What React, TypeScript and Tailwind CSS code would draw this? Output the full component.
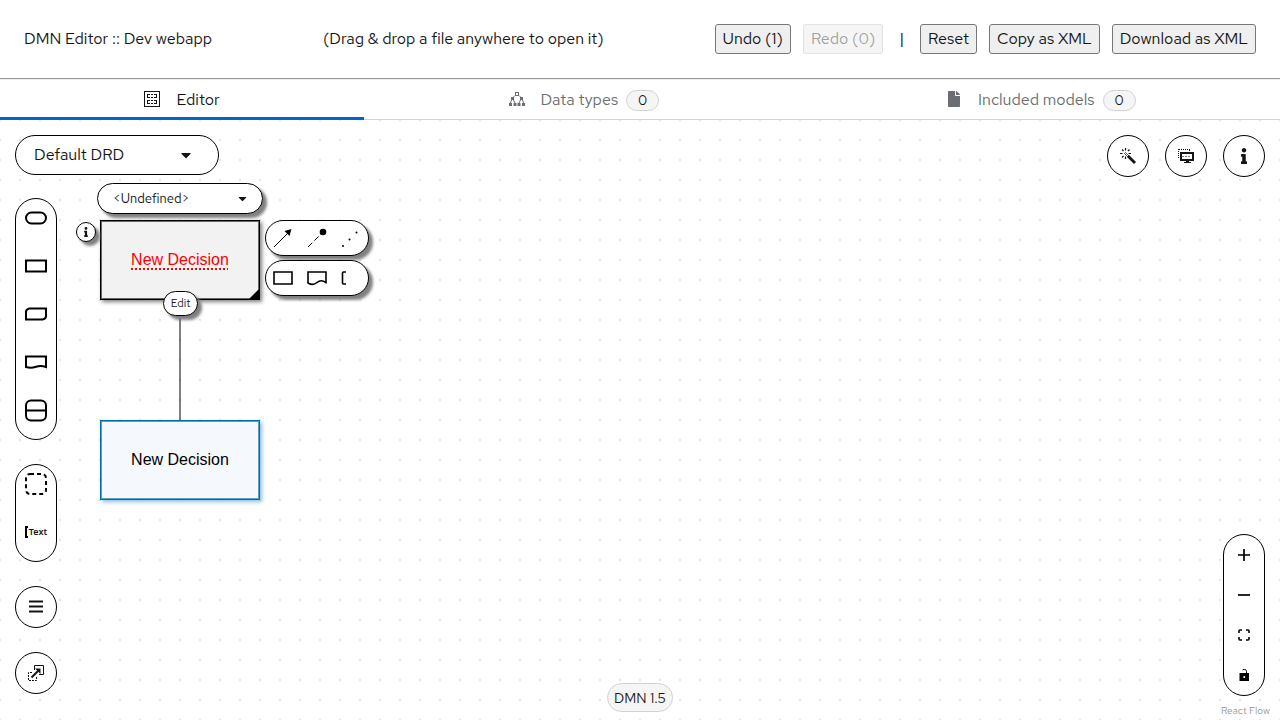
import type { ReactNode } from 'react';
import { FaCaretDown, FaFile, FaInfo } from 'react-icons/fa';

const headerButton =
  'h-[30px] rounded-[3px] border border-[#767676] bg-[#efefef] px-[7px] text-base text-[#151515] disabled:border-[#d6d6d6]/60 disabled:bg-[#efefef]/60 disabled:text-[#101010]/40';

const floatShadow = 'shadow-[4px_4px_3px_#808080]';

function Count({ value }: { value: number }) {
  return (
    <span className="flex h-[21px] min-w-[33px] items-center justify-center rounded-full border border-[#d2d2d2] bg-[#f5f5f5] px-2 text-sm text-[#151515]">
      {value}
    </span>
  );
}

function Tab({ icon, label, count, active = false }: { icon: ReactNode; label: string; count?: number; active?: boolean }) {
  return (
    <button
      type="button"
      role="tab"
      aria-selected={active}
      className={
        active
          ? 'flex h-10 flex-auto items-center justify-center border-b-3 border-[#0066cc] pt-[3px] text-[#151515]'
          : 'flex h-10 flex-auto items-center justify-center border-b border-[#d2d2d2] pt-px text-[#6a6e73]'
      }
    >
      <span className="mr-4 flex items-center pb-0.5">{icon}</span>
      <span>{label}</span>
      {count !== undefined && (
        <span className="ml-2">
          <Count value={count} />
        </span>
      )}
    </button>
  );
}

function EditorIcon() {
  return (
    <svg width="16" height="16" viewBox="0 0 16 16" fill="none" stroke="currentColor" shapeRendering="crispEdges">
      <path d="M0.5 0.5h15v15h-15z" />
      <path d="M3.5 6V3.5H6M7 3.5h2M10 3.5h2.5V6M3 6.5h3M7 6.5h2M10 6.5h3" />
      <path d="M3 9.5h3M7 9.5h2M10 9.5h3M3.5 10v2.5H6M7 12.5h2M10 12.5h2.5V10" />
    </svg>
  );
}

function TreeIcon() {
  return (
    <svg width="16" height="16" viewBox="0 0 16 16" fill="currentColor">
      <path fillRule="evenodd" d="M6 1h4v4H6zM7 2v2h2V2z" />
      <path d="M6 4.500 3.500 7M10 4.500 12.500 7" stroke="currentColor" />
      <path d="M2 6h3v3H2zM11 6h3v3h-3z" />
      <path d="M2.500 9 1.500 12M4.500 9 6 12M11.500 9 10 12M13.500 9 14.500 12" stroke="currentColor" />
      <path d="M0 12h3v3H0zM4.500 12h3v3h-3zM8.500 12h3v3h-3zM13 12h3v3h-3z" />
    </svg>
  );
}

function WandIcon() {
  return (
    <svg width="16" height="16" viewBox="0 0 16 16" fill="none" stroke="#151515">
      <path d="M8 8 15 15" strokeWidth="2.800" />
      <path d="M4.500 5.500 5.500 4.500 9.500 8.500 8.500 9.500z" strokeWidth="0.700" />
      <path d="M5.500 0v2.500M2 1.500 3.500 3M9.500 1.500 8 3M0 5.500h2.500M8.500 5.500H11M2 9.500 3.500 8M5.500 8.500V11" strokeWidth="1.200" />
    </svg>
  );
}

function ScreensIcon() {
  return (
    <svg width="18" height="16" viewBox="0 0 18 16" fill="none" stroke="#151515" shapeRendering="crispEdges">
      <path d="M1.500 1v9M2 1.500h11M12.500 1.500v3" strokeDasharray="1 1" />
      <path d="M4 5h12v7H4z" strokeWidth="2" />
      <path d="M5 8.500h9" stroke="#777" strokeDasharray="2 1" />
      <path d="M9 13.500h3M7 14.500h7" />
    </svg>
  );
}

function ExpandIcon() {
  return (
    <svg width="16" height="16" viewBox="0 0 16 16" fill="none" stroke="#151515">
      <path d="M6.500 5V0.500h9v9H11" />
      <path d="M4 7.500H0.500v8h8V12" strokeDasharray="2 1" />
      <path d="M3.500 12.500 11 5" strokeWidth="2" />
      <path d="M7 3.500h5.500V9z" fill="#151515" stroke="none" />
    </svg>
  );
}

function PaletteItem({ label, children }: { label: string; children: ReactNode }) {
  return (
    <button type="button" aria-label={label} className="mb-2.5 flex h-[38px] items-center justify-center">
      <svg width="26" height="26" viewBox="0 0 26 26" fill="none" stroke="#000" strokeWidth="2">
        {children}
      </svg>
    </button>
  );
}

function RoundButton({ label, children }: { label: string; children: ReactNode }) {
  return (
    <button
      type="button"
      aria-label={label}
      className="flex size-[42px] items-center justify-center rounded-full border border-black bg-white text-[#151515]"
    >
      {children}
    </button>
  );
}

function ControlButton({ label, children }: { label: string; children: ReactNode }) {
  return (
    <button type="button" aria-label={label} className="flex h-10 items-center justify-center">
      <svg width="12" height="12" viewBox="0 0 12 12" fill="none" stroke="#000">
        {children}
      </svg>
    </button>
  );
}

function Diagram() {
  return (
    <div className="absolute inset-0">
      <svg className="absolute top-[180px] left-[170px]" width="20" height="120" viewBox="0 0 20 120" aria-hidden="true">
        <path d="M10 0v120" stroke="#000" />
      </svg>

      <div className="absolute top-[100px] left-[100px] flex h-20 w-40 items-center justify-center border border-black bg-[#f2f2f2] font-['Liberation_Sans',sans-serif] text-base text-[#ff0000] shadow-[inset_0_0_0_1px_#666666,2px_2px_4px_#808080]">
        <span className="underline decoration-dotted decoration-2 underline-offset-[3px]">New Decision</span>
        <svg className="absolute right-[-1px] bottom-[-1px]" width="12" height="12" viewBox="0 0 12 12" aria-hidden="true">
          <path d="M12 0v12H0z" />
        </svg>
      </div>

      <div className="absolute top-[300px] left-[100px] flex h-20 w-40 items-center justify-center border border-[#006ba4] bg-[#f5f9fd] font-['Liberation_Sans',sans-serif] text-base text-black shadow-[inset_0_0_0_1px_#5c9fc6,2px_2px_4px_#8cbfde]">
        New Decision
      </div>

      <button
        type="button"
        className={`absolute top-[63px] left-[97px] flex h-[31px] w-[166px] items-center justify-between rounded-full border border-black bg-white pr-[13px] pl-[15px] text-[13px] ${floatShadow}`}
      >
        <span>&lt;Undefined&gt;</span>
        <FaCaretDown className="size-[13px]" />
      </button>

      <button
        type="button"
        aria-label="Properties"
        className={`absolute top-[102px] left-[76px] flex size-5 items-center justify-center rounded-full border border-black bg-white ${floatShadow}`}
      >
        <FaInfo className="size-[10px]" />
      </button>

      <button
        type="button"
        className={`absolute top-[171px] left-[163px] flex h-[25px] w-[35px] items-center justify-center rounded-full border border-black bg-white text-[11px] ${floatShadow}`}
      >
        Edit
      </button>

      <div className={`absolute top-[100px] left-[265px] flex h-9 w-[104px] items-center justify-between rounded-full border border-black bg-white px-[7px] ${floatShadow}`}>
        <button type="button" aria-label="Information requirement">
          <svg width="20" height="20" viewBox="0 0 20 20">
            <path d="M1 19 15 5" stroke="#000" />
            <path d="M18.500 1 16.500 8 11.500 3z" />
          </svg>
        </button>
        <button type="button" aria-label="Authority requirement">
          <svg width="20" height="20" viewBox="0 0 20 20">
            <path d="M1 19 14 6" stroke="#000" strokeDasharray="6 3" />
            <circle cx="16" cy="4" r="3.300" />
          </svg>
        </button>
        <button type="button" aria-label="Association">
          <svg width="20" height="20" viewBox="0 0 20 20">
            <circle cx="2" cy="18" r="1" />
            <circle cx="8.500" cy="11.500" r="1" />
            <circle cx="15.500" cy="4.500" r="1" />
          </svg>
        </button>
      </div>

      <div className={`absolute top-[140px] left-[265px] flex h-9 w-[104px] items-center justify-between rounded-full border border-black bg-white px-[7px] ${floatShadow}`}>
        <button type="button" aria-label="Add decision">
          <svg width="20" height="20" viewBox="0 0 20 20" fill="none" stroke="#000" strokeWidth="1.600">
            <path d="M1 4h18v12H1z" />
          </svg>
        </button>
        <button type="button" aria-label="Add knowledge source">
          <svg width="20" height="20" viewBox="0 0 20 20" fill="none" stroke="#000" strokeWidth="1.600">
            <path d="M1 4h18v10.500Q14 11 10 14.500T1 15z" />
          </svg>
        </button>
        <button type="button" aria-label="Add text annotation">
          <svg width="20" height="20" viewBox="0 0 20 20" fill="none" stroke="#000" strokeWidth="1.600">
            <path d="M5 4H2.500q-1 0-1 1v10q0 1 1 1h2.500" />
          </svg>
        </button>
      </div>
    </div>
  );
}

export default function App() {
  return (
    <div className="flex min-h-screen flex-col bg-white font-['Red_Hat_Text','Open_Sans',sans-serif] text-base text-[#151515]">
      <header className="flex h-20 items-center justify-between border-b border-[#eeeeee] px-6 pb-0.5 shadow-[inset_0_-1px_0_#9a9a9a]">
        <span>DMN Editor :: Dev webapp</span>
        <span>(Drag &amp; drop a file anywhere to open it)</span>
        <div className="flex items-center gap-3">
          <button type="button" className={headerButton}>Undo (1)</button>
          <button type="button" className={headerButton} disabled>Redo (0)</button>
          <span className="px-1 text-black">|</span>
          <button type="button" className={headerButton}>Reset</button>
          <button type="button" className={headerButton}>Copy as XML</button>
          <button type="button" className={headerButton}>Download as XML</button>
        </div>
      </header>

      <nav role="tablist" className="flex">
        <Tab active icon={<EditorIcon />} label="Editor" />
        <Tab icon={<TreeIcon />} label="Data types" count={0} />
        <Tab icon={<FaFile className="mr-0.5 h-4 w-3" />} label="Included models" count={0} />
      </nav>

      <main className="relative flex flex-1 bg-[radial-gradient(circle,#e6e6e6_1px,transparent_1px)] bg-size-[20px_20px] bg-position-[-10px_-10px]">
        <Diagram />

        <div className="pointer-events-none relative flex flex-1 justify-between px-[15px] pt-[15px]">
          <div className="pointer-events-auto flex flex-col items-start gap-6">
            <button type="button" className="-mb-px flex h-10 w-[204px] items-center justify-between rounded-full border border-black bg-white pr-6 pl-[18px]">
              <span>Default DRD</span>
              <FaCaretDown className="size-4" />
            </button>
            <div className="flex w-[42px] flex-col rounded-full border border-black bg-white">
              <PaletteItem label="Input data">
                <rect x="3" y="7.500" width="20" height="11" rx="5.500" />
              </PaletteItem>
              <PaletteItem label="Decision">
                <rect x="3" y="7.500" width="20" height="11" />
              </PaletteItem>
              <PaletteItem label="Business knowledge model">
                <path d="M6.500 7.500H23v8q-.5 2.500-3.500 3H3v-8q.5-2.500 3.500-3z" />
              </PaletteItem>
              <PaletteItem label="Knowledge source">
                <path d="M3 7.500h20v10.500q-5-2-10-.3t-10 .3z" />
              </PaletteItem>
              <PaletteItem label="Decision service">
                <rect x="3" y="3.500" width="20" height="20" rx="5" />
                <path d="M3 13.500h20" />
              </PaletteItem>
            </div>
            <div className="flex w-[42px] flex-col rounded-full border border-black bg-white">
              <PaletteItem label="Group">
                <rect x="3" y="3" width="20" height="20" rx="4" strokeDasharray="4 3" />
              </PaletteItem>
              <button type="button" className="mb-2.5 flex h-[38px] items-center justify-center gap-px">
                <svg width="3" height="12" viewBox="0 0 3 12" fill="none" stroke="#000" strokeWidth="2" aria-hidden="true">
                  <path d="M3 1H1v10h2" />
                </svg>
                <span className="font-['Noto_Sans',sans-serif] text-[9px] font-semibold">Text</span>
              </button>
            </div>
            <RoundButton label="Open nodes list">
              <svg width="14" height="14" viewBox="0 0 14 14" fill="none" stroke="#151515" strokeWidth="2">
                <path d="M0 1.500h14M0 6.500h14M0 11.500h14" />
              </svg>
            </RoundButton>
            <RoundButton label="External nodes">
              <ExpandIcon />
            </RoundButton>
          </div>

          <div className="flex flex-col items-end justify-between">
            <div className="pointer-events-auto flex gap-4">
              <RoundButton label="Autolayout">
                <WandIcon />
              </RoundButton>
              <RoundButton label="Overlays">
                <ScreensIcon />
              </RoundButton>
              <RoundButton label="Properties">
                <FaInfo className="size-4" />
              </RoundButton>
            </div>
            <div className="pointer-events-auto mb-6 flex w-[42px] flex-col rounded-full border border-black bg-white">
              <ControlButton label="Zoom in">
                <path d="M0 6h12M6 0v12" strokeWidth="1.700" />
              </ControlButton>
              <ControlButton label="Zoom out">
                <path d="M0 6h12" strokeWidth="1.700" />
              </ControlButton>
              <ControlButton label="Fit view">
                <path d="M1 4V2q0-1 1-1h2M8 1h2q1 0 1 1v2M11 8v2q0 1-1 1H8M4 11H2q-1 0-1-1V8" strokeWidth="1.600" />
              </ControlButton>
              <ControlButton label="Toggle interactivity">
                <path d="M4.500 1Q8 -1 8.500 2.500V4" />
                <path d="M1.500 4h9.500v8H1.500z" fill="#000" stroke="none" />
                <circle cx="6.200" cy="8" r="1" fill="#fff" stroke="none" />
              </ControlButton>
            </div>
          </div>
        </div>

        <span className="absolute bottom-2 left-1/2 flex h-[29px] -translate-x-1/2 items-center rounded-full border border-[#d2d2d2] bg-[#f5f5f5] px-1.5 text-sm">
          DMN 1.5
        </span>
        <a href="#react-flow" className="absolute right-2.5 bottom-[2px] text-[10px] text-[#999999]">
          React Flow
        </a>
      </main>
    </div>
  );
}
